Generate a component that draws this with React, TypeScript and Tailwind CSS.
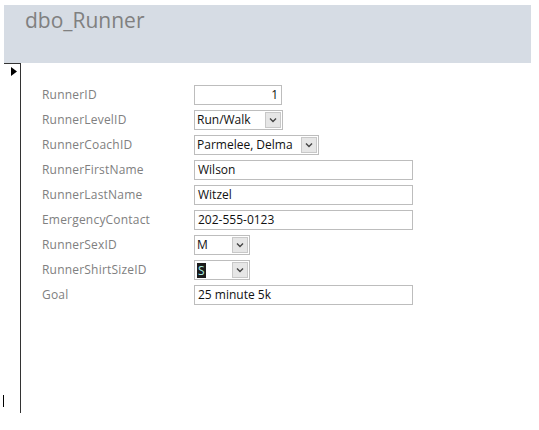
import React from 'react';

type Field =
  | { label: string; kind: 'text'; value: string; width: string; align?: 'right' }
  | { label: string; kind: 'combo'; value: string; width: string; selected?: boolean };

const fields: Field[] = [
  { label: 'RunnerID', kind: 'text', value: '1', width: 'w-[88px]', align: 'right' },
  { label: 'RunnerLevelID', kind: 'combo', value: 'Run/Walk', width: 'w-[89px]' },
  { label: 'RunnerCoachID', kind: 'combo', value: 'Parmelee, Delma', width: 'w-[125px]' },
  { label: 'RunnerFirstName', kind: 'text', value: 'Wilson', width: 'w-[219px]' },
  { label: 'RunnerLastName', kind: 'text', value: 'Witzel', width: 'w-[219px]' },
  { label: 'EmergencyContact', kind: 'text', value: '202-555-0123', width: 'w-[219px]' },
  { label: 'RunnerSexID', kind: 'combo', value: 'M', width: 'w-[56px]' },
  { label: 'RunnerShirtSizeID', kind: 'combo', value: 'S', width: 'w-[56px]', selected: true },
  { label: 'Goal', kind: 'text', value: '25 minute 5k', width: 'w-[219px]' },
];

function Chevron() {
  return (
    <svg width="8" height="6" viewBox="0 0 8 6" className="block">
      <path d="M1 1.5 L4 4.5 L7 1.5" fill="none" stroke="#444" strokeWidth="1.4" />
    </svg>
  );
}

function Control({ field }: { field: Field }) {
  if (field.kind === 'text') {
    return (
      <div
        className={`${field.width} h-[20px] border border-[#bdbdbd] bg-white flex items-center px-[3px] text-[12px] text-[#111] ${
          field.align === 'right' ? 'justify-end' : ''
        }`}
      >
        {field.value}
      </div>
    );
  }
  return (
    <div className={`${field.width} h-[20px] border border-[#bdbdbd] bg-white flex items-stretch text-[12px] text-[#111]`}>
      <div className="flex-1 flex items-center pl-[2px]">
        {field.selected ? (
          <span className="bg-[#1b1b1b] text-[#a8eee2] leading-[15px] px-[1px]">{field.value}</span>
        ) : (
          field.value
        )}
      </div>
      <div className="w-[16px] m-[1px] border border-[#c8c8c8] bg-[#e6e6e6] flex items-center justify-center">
        <Chevron />
      </div>
    </div>
  );
}

export default function App() {
  return (
    <div
      className="w-[539px] h-[430px] bg-white overflow-hidden pt-[5px]"
      style={{ fontFamily: '"Open Sans", "Noto Sans", sans-serif' }}
    >
      <div className="ml-[4px] w-[527px] h-[58px] bg-[#d6dce4] pl-[21px] pt-[1px]">
        <h1 className="text-[21px] leading-[29px] text-[#808080]">dbo_Runner</h1>
      </div>

      <div className="flex">
        <div className="ml-[4px] w-[17px] h-[350px] border-t border-r border-[#333] flex flex-col justify-between">
          <svg width="6" height="9" viewBox="0 0 6 9" className="ml-[7px] mt-[3px]">
            <path d="M0 0 L6 4.5 L0 9 Z" fill="#000" />
          </svg>
          <div className="w-px h-[12px] bg-black -ml-px mb-[6px]" />
        </div>

        <div className="pl-[21px] pt-[22px] flex flex-col gap-[5px]">
          {fields.map((f) => (
            <div key={f.label} className="flex items-center h-[20px]">
              <div className="w-[152px] text-[12px] tracking-[0.2px] text-[#808080]">{f.label}</div>
              <Control field={f} />
            </div>
          ))}
        </div>
      </div>
    </div>
  );
}
